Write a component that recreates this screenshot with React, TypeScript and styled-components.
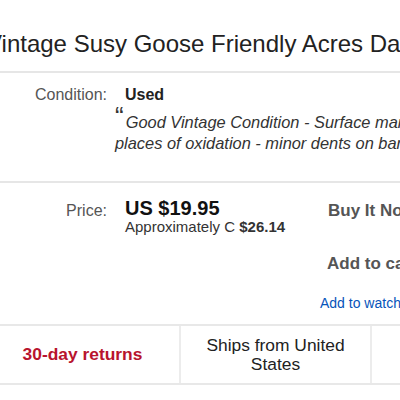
import React from 'react';
import styled, { createGlobalStyle } from 'styled-components';

const GlobalStyle = createGlobalStyle`
    html, body {
        margin: 0;
        padding: 0;
        background: #fff;
        overflow: hidden;
    }
    body {
        font-family: 'Liberation Sans', Arial, sans-serif;
        color: #333;
    }
`;

const Page = styled.div`
    width: 640px;
    margin-left: -14px;
    padding-top: 30px;
`;

const Title = styled.h1`
    margin: 0;
    font-size: 24px;
    line-height: 28px;
    font-weight: normal;
    color: #222;
    white-space: nowrap;
`;

const Rule = styled.div`
    height: 2px;
    background: #e6e6e6;
    margin-top: ${(p: { top: number }) => p.top}px;
`;

const Row = styled.div`
    display: flex;
    align-items: flex-start;
    margin-top: ${(p: { top: number }) => p.top}px;
`;

const Label = styled.div`
    width: 121px;
    flex: none;
    text-align: right;
    font-size: 16px;
    line-height: 20px;
    color: #555;
`;

const Value = styled.div`
    margin-left: 18px;
    margin-top: ${(p: { w: number; top?: number }) => p.top || 0}px;
    flex: none;
    width: ${(p: { w: number; top?: number }) => p.w}px;
`;

const Strong = styled.div`
    font-size: 16px;
    line-height: 20px;
    font-weight: bold;
    color: #222;
`;

const Quote = styled.div`
    margin-top: 7px;
    margin-left: -10px;
    font-size: 16.4px;
    line-height: 21px;
    font-style: italic;
    color: #333;
    white-space: nowrap;
`;

const QuoteMark = styled.span`
    font-style: normal;
    font-size: 26px;
    line-height: 0;
    position: relative;
    top: -3px;
    margin-right: 2px;
    color: #333;
`;

const PriceBig = styled.div`
    font-size: 20px;
    line-height: 22px;
    font-weight: bold;
    color: #111;
`;

const Approx = styled.div`
    font-size: 15px;
    line-height: 16px;
    color: #333;
    white-space: nowrap;
    b {
        font-weight: bold;
    }
`;

const Actions = styled.div`
    display: flex;
    flex-direction: column;
    align-items: flex-start;
`;

const ActionText = styled.div`
    font-size: 17px;
    line-height: 20px;
    font-weight: bold;
    color: #555;
    padding-left: ${(p: { pad: number; gap: number }) => p.pad}px;
    margin-bottom: ${(p: { pad: number; gap: number }) => p.gap}px;
    white-space: nowrap;
`;

const WatchLink = styled.a`
    font-size: 14px;
    line-height: 16px;
    color: #0654ba;
    text-decoration: none;
    white-space: nowrap;
`;

const Boxes = styled.div`
    display: flex;
    margin-top: 13px;
    border-top: 2px solid #e8e8e8;
    border-bottom: 2px solid #e8e8e8;
    height: 57px;
`;

const Box = styled.div`
    width: ${(p: { w: number }) => p.w}px;
    flex: none;
    display: flex;
    align-items: center;
    justify-content: center;
    text-align: center;
    border-right: 2px solid #ececec;
    font-size: 17.4px;
    line-height: 19px;
    color: #222;
`;

const Returns = styled.span`
    color: #b8142d;
    font-weight: bold;
`;

export default function App() {
    return (
        <>
            <GlobalStyle />
            <Page>
                <Title>Vintage Susy Goose Friendly Acres Dairy Farm</Title>
                <Rule top={13} />
                <Row top={12}>
                    <Label>Condition:</Label>
                    <Value w={500}>
                        <Strong>Used</Strong>
                        <Quote>
                            <QuoteMark>“</QuoteMark>Good Vintage Condition - Surface marks and
                            <br />
                            places of oxidation - minor dents on barn roof
                        </Quote>
                    </Value>
                </Row>
                <Rule top={27} />
                <Row top={18}>
                    <Label>Price:</Label>
                    <Value w={195} top={-4}>
                        <PriceBig>US $19.95</PriceBig>
                        <Approx>
                            Approximately C <b>$26.14</b>
                        </Approx>
                    </Value>
                    <Actions>
                        <ActionText pad={8} gap={33}>Buy It Now</ActionText>
                        <ActionText pad={7} gap={21}>Add to cart</ActionText>
                        <WatchLink href="#">Add to watch list</WatchLink>
                    </Actions>
                </Row>
                <Boxes>
                    <Box w={193}>
                        <Returns>30-day returns</Returns>
                    </Box>
                    <Box w={189}>
                        Ships from United
                        <br />
                        States
                    </Box>
                    <Box w={200} />
                </Boxes>
            </Page>
        </>
    );
}
